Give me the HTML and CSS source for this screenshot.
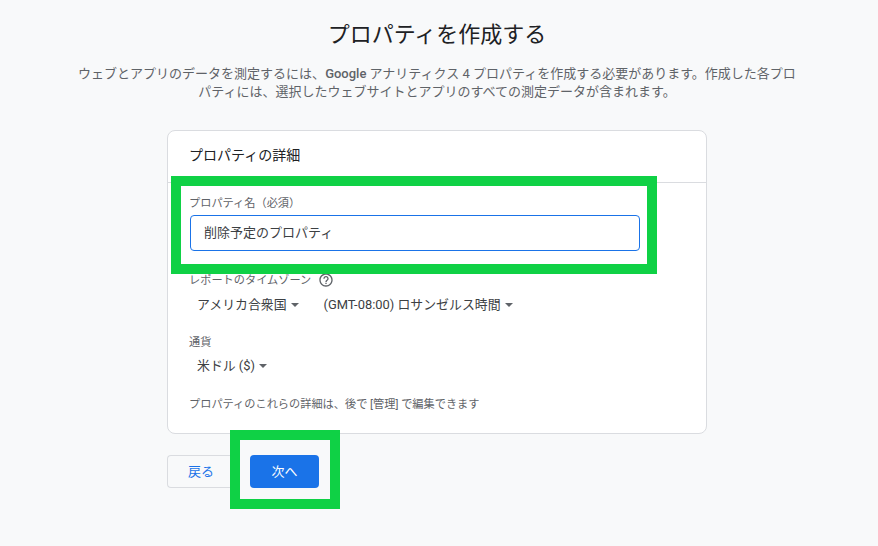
FILE: index.html
```html
<!DOCTYPE html>
<html lang="ja">
<head>
<meta charset="utf-8">
<title>プロパティを作成する</title>
<link rel="stylesheet" href="styles.css">
</head>
<body>
<main class="page">
  <h1 class="title">プロパティを作成する</h1>
  <p class="intro">ウェブとアプリのデータを測定するには、<span class="brand">Google</span> アナリティクス 4 プロパティを作成する必要があります。作成した各プロパティには、選択したウェブサイトとアプリのすべての測定データが含まれます。</p>
  <section class="card">
    <h2 class="card-title">プロパティの詳細</h2>
    <div class="card-body">
      <label class="label" for="name">プロパティ名（必須）</label>
      <input class="input" id="name" type="text" value="削除予定のプロパティ">
      <div class="label tz-label">レポートのタイムゾーン
        <svg class="help" viewBox="0 0 24 24" width="16" height="16"><path fill="#5f6368" d="M11 18h2v-2h-2v2zm1-16C6.48 2 2 6.48 2 12s4.48 10 10 10 10-4.48 10-10S17.52 2 12 2zm0 18c-4.41 0-8-3.59-8-8s3.59-8 8-8 8 3.59 8 8-3.59 8-8 8zm0-14c-2.21 0-4 1.79-4 4h2c0-1.1.9-2 2-2s2 .9 2 2c0 2-3 1.75-3 5h2c0-2.25 3-2.5 3-5 0-2.21-1.79-4-4-4z"/></svg>
      </div>
      <div class="selects">
        <span class="select">アメリカ合衆国<i class="caret"></i></span>
        <span class="select tz">(GMT-08:00) ロサンゼルス時間<i class="caret"></i></span>
      </div>
      <div class="label currency-label">通貨</div>
      <div class="selects currency">
        <span class="select">米ドル ($)<i class="caret"></i></span>
      </div>
      <p class="note">プロパティのこれらの詳細は、後で [管理] で編集できます</p>
    </div>
  </section>
  <div class="actions">
    <button class="btn back" type="button">戻る</button>
    <button class="btn next" type="button">次へ</button>
  </div>
</main>
<div class="mark mark-field"></div>
<div class="mark mark-next"></div>
</body>
</html>
```
FILE: styles.css
```css
* { box-sizing: border-box; }
html, body { margin: 0; height: 100%; }
body {
  position: relative;
  background: #f8f9fa;
  color: #3c4043;
  font-family: Roboto, "Noto Sans CJK JP", sans-serif;
  overflow: hidden;
}
.page {
  width: 874px;
  padding-top: 20px;
  display: flex;
  flex-direction: column;
  align-items: center;
}
.title {
  margin: 0;
  font-size: 22px;
  line-height: 30px;
  font-weight: 400;
  color: #202124;
}
.intro {
  margin: 15px 0 0;
  width: 728px;
  font-size: 13px;
  line-height: 18px;
  color: #5f6368;
  text-align: center;
}
.brand { font-weight: 500; }
.card {
  width: 540px;
  height: 304px;
  margin-top: 29px;
  background: #fff;
  border: 1px solid #dadce0;
  border-radius: 8px;
}
.card-title {
  margin: 0;
  height: 52px;
  padding: 14px 21px 0;
  font-size: 14px;
  line-height: 20px;
  font-weight: 400;
  color: #202124;
  border-bottom: 1px solid #dadce0;
}
.card-body { padding: 13px 21px 0; }
.label {
  display: block;
  font-size: 11.2px;
  line-height: 16px;
  color: #5f6368;
}
.input {
  display: block;
  width: 450px;
  height: 36px;
  margin-top: 3px;
  margin-left: 1px;
  padding: 0 13px 4px;
  border: 1px solid #1a73e8;
  border-radius: 4px;
  outline: none;
  background: #fff;
  color: #3c4043;
  font: 13px Roboto, "Noto Sans CJK JP", sans-serif;
}
.tz-label {
  display: flex;
  align-items: center;
  gap: 7px;
  margin-top: 22px;
}
.help { margin-top: -2px; }
.selects {
  display: flex;
  gap: 25px;
  margin-top: 4px;
  padding-left: 8px;
  font-size: 12.9px;
  line-height: 24px;
  color: #3c4043;
}
.select { display: inline-flex; align-items: center; }
.caret {
  width: 0;
  height: 0;
  margin-left: 4px;
  border-left: 4px solid transparent;
  border-right: 4px solid transparent;
  border-top: 4px solid #5f6368;
}
.currency-label { margin-top: 18px; }
.currency { margin-top: 3px; }
.note {
  margin: 19px 0 0;
  font-size: 11.2px;
  line-height: 16px;
  color: #5f6368;
}
.actions {
  width: 540px;
  display: flex;
  gap: 20px;
  margin-top: 21px;
}
.btn {
  height: 33px;
  border-radius: 4px;
  font: 13px Roboto, "Noto Sans CJK JP", sans-serif;
  padding-bottom: 3px;
}
.back {
  width: 63px;
  background: #f8f9fa;
  border: 1px solid #dadce0;
  border-right: none;
  border-radius: 4px 0 0 4px;
  color: #1a73e8;
  text-align: left;
  padding-left: 20px;
}
.next {
  width: 69px;
  background: #1a73e8;
  border: none;
  color: #fff;
}
.mark {
  position: absolute;
  border: 10px solid #0fd145;
}
.mark-field { left: 171px; top: 176px; width: 486px; height: 98px; }
.mark-next { left: 230px; top: 430px; width: 110px; height: 79px; }
```
